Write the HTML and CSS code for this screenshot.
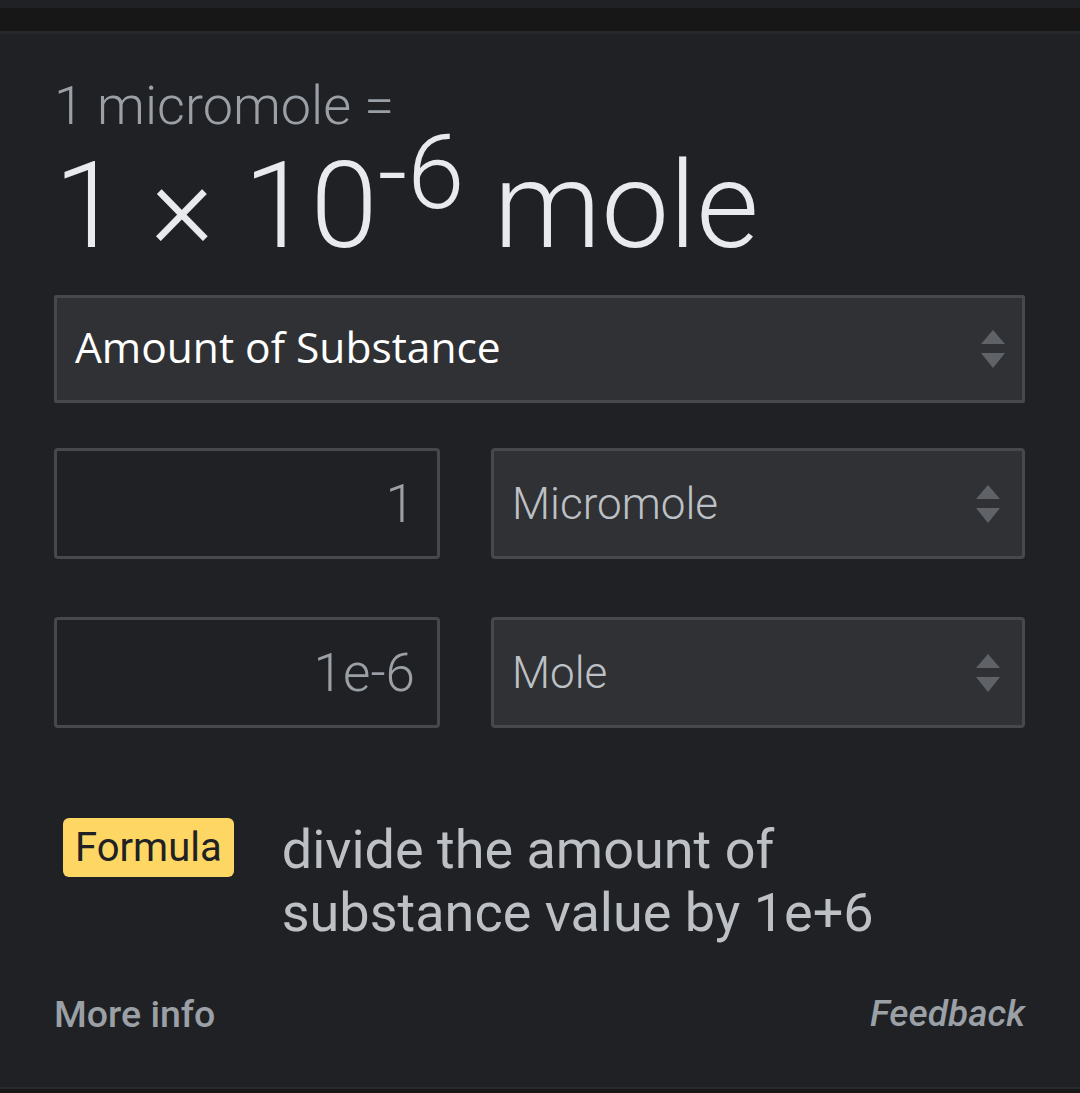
FILE: index.html
```html
<!DOCTYPE html>
<html>
<head>
    <title>Unit converter</title>
    <link rel="stylesheet" href="styles.css">
</head>
<body>
    <div class="topbar"></div>

    <div class="card">
        <div class="lhs">1 micromole =</div>
        <div class="rhs">1 × 10<sup>-6</sup> mole</div>

        <div class="select wide">
            <span class="select-label">Amount of Substance</span>
            <svg class="updown" width="24" height="38" viewBox="0 0 24 38"><path d="M12 0 L24 14 H0 Z M0 23 H24 L12 38 Z"/></svg>
        </div>

        <div class="row">
            <input class="num" type="text" value="1">
            <div class="select">
                <span class="unit">Micromole</span>
                <svg class="updown" width="24" height="38" viewBox="0 0 24 38"><path d="M12 0 L24 14 H0 Z M0 23 H24 L12 38 Z"/></svg>
            </div>
        </div>

        <div class="row">
            <input class="num" type="text" value="1e-6">
            <div class="select">
                <span class="unit">Mole</span>
                <svg class="updown" width="24" height="38" viewBox="0 0 24 38"><path d="M12 0 L24 14 H0 Z M0 23 H24 L12 38 Z"/></svg>
            </div>
        </div>

        <div class="formula">
            <span class="badge">Formula</span>
            <p class="formula-text">divide the amount of substance value by 1e+6</p>
        </div>

        <div class="footer">
            <a class="more">More info</a>
            <a class="feedback">Feedback</a>
        </div>
    </div>
    <div class="bottombar"></div>
</body>
</html>
```

FILE: styles.css
```css
body { margin: 0; background: #202124; font-family: Roboto, "Noto Sans", sans-serif; color: #e8eaed; }
.topbar { height: 23px; margin-top: 8px; background: #171717; border-bottom: 3px solid #28292c; }
.card { padding: 0 55px 0 54px; height: 1053px; box-sizing: border-box; }
.lhs { font-size: 54px; font-weight: 300; color: #9aa0a6; line-height: 60px; padding-top: 42px; }
.rhs { font-size: 121px; font-weight: 300; color: #e8eaed; line-height: 130px; margin-top: 5px; white-space: nowrap; }
.rhs sup { font-size: 103px; line-height: 0; vertical-align: 39px; }
.select { display: flex; align-items: center; justify-content: space-between; background: #303134; border: 3px solid #45484c; border-radius: 4px; box-sizing: border-box; padding: 0 22px 0 18px; }
.select.wide { height: 108px; margin-top: 24px; border-radius: 2px; padding: 0 17px 0 18px; }
.select-label { font-family: "Open Sans", sans-serif; font-size: 42.5px; color: #fff; margin-bottom: 6px; }
.updown { fill: #5f6368; }
.row { display: grid; grid-template-columns: 386px 534px; gap: 51px; margin-top: 45px; height: 111px; }
.row + .row { margin-top: 58px; }
.num { background: #202124; border: 3px solid #45484c; border-radius: 4px; box-sizing: border-box; font-family: Roboto, sans-serif; font-weight: 300; font-size: 53px; color: #9aa0a6; text-align: right; padding: 0 22px 0 0; margin: 0; width: 100%; height: 111px; outline: none; }
.unit { font-size: 44px; font-weight: 300; color: #bdc1c6; }
.formula { display: flex; align-items: flex-start; margin-top: 90px; }
.badge { background: #fdd663; color: #202124; font-size: 40px; border-radius: 6px; padding: 0 12px; height: 59px; line-height: 59px; margin: 0 48px 0 9px; flex: none; }
.formula-text { margin: 0; font-size: 54px; line-height: 63px; color: #bdc1c6; max-width: 630px; }
.footer { display: flex; justify-content: space-between; margin-top: 48px; }
.footer a { font-size: 37.5px; font-weight: 500; color: #9aa0a6; cursor: pointer; }
.footer .feedback { font-size: 37px; font-style: italic; }
.bottombar { height: 4px; background: #171717; border-top: 2px solid #28292c; }
```
